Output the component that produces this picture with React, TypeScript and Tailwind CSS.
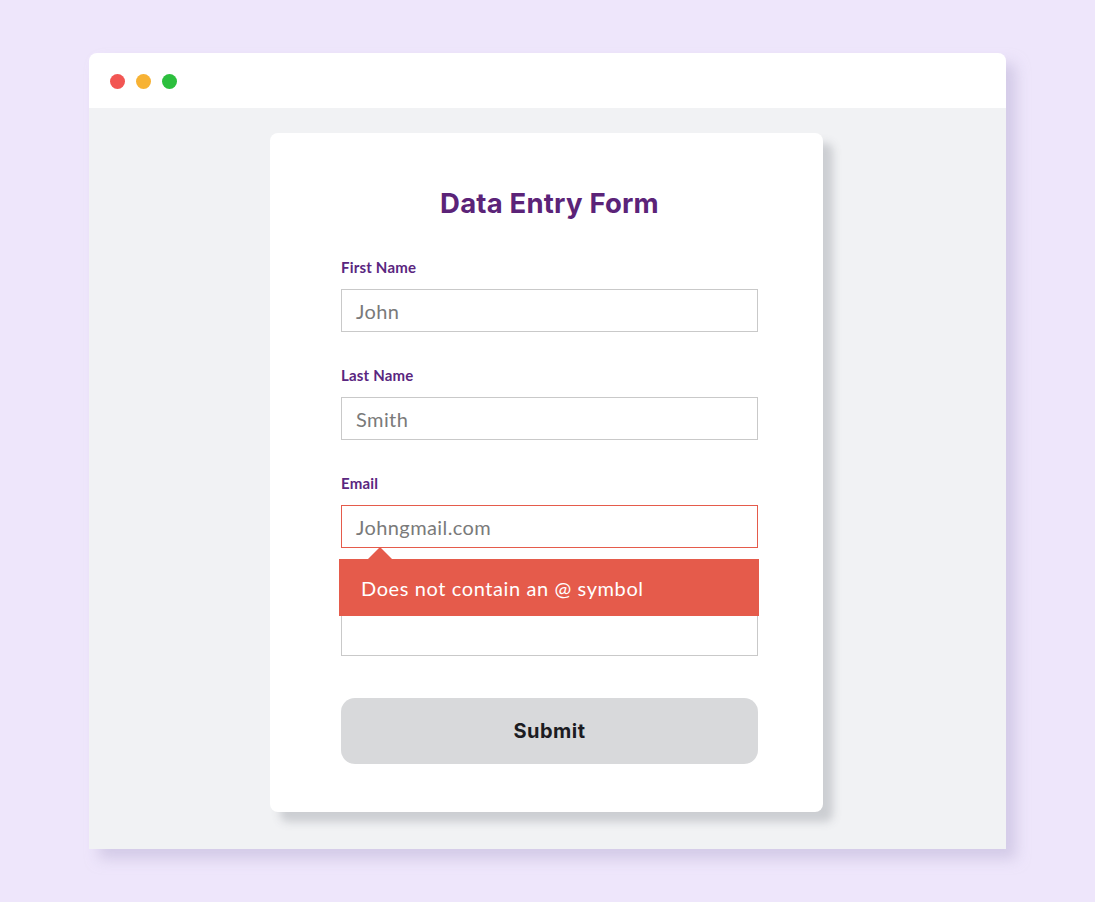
import React from "react";

function Label({ text }: { text: string }) {
  return (
    <label className="block text-[15px] leading-[20px] font-bold text-[#5A2680] font-['Lato',sans-serif] tracking-[0.2px] h-[20px]">
      {text}
    </label>
  );
}

function Field({ label, value }: { label: string; value: string }) {
  return (
    <div className="flex flex-col">
      <Label text={label} />
      <div className="mt-[12px] h-[43px] border border-[#C9C9C9] flex items-center pl-[14px] text-[20px] tracking-[0.4px] text-[#7a7a7a] font-['Lato',sans-serif]">
        {value}
      </div>
    </div>
  );
}

export default function App() {
  return (
    <div className="w-full h-[902px] bg-[#EEE6FB] pt-[53px] pl-[89px] overflow-hidden">
      <div className="w-[917px] h-[796px] rounded-t-[8px] flex flex-col shadow-[10px_10px_14px_rgba(190,180,215,0.55)]">
        <div className="h-[55px] bg-white rounded-t-[8px] flex items-center gap-[11px] pl-[21px] pt-[2px]">
          <span className="w-[15px] h-[15px] rounded-full bg-[#F25653]" />
          <span className="w-[15px] h-[15px] rounded-full bg-[#F7B234]" />
          <span className="w-[15px] h-[15px] rounded-full bg-[#2CBF3E]" />
        </div>
        <div className="flex-1 bg-[#F1F2F4] pt-[25px] pl-[181px]">
          <div className="w-[553px] h-[679px] bg-white rounded-[8px] shadow-[10px_10px_8px_rgba(200,202,206,0.9)] pl-[71px] pr-[65px] pt-[54px]">
            <h1 className="text-center text-[27.5px] leading-[32px] font-bold text-[#5B2378] font-['Inter',sans-serif] tracking-[0.2px]">
              Data Entry Form
            </h1>
            <div className="mt-[38px] flex flex-col gap-[33px]">
              <Field label="First Name" value="John" />
              <Field label="Last Name" value="Smith" />
              <div className="relative flex flex-col">
                <Label text="Email" />
                <div className="mt-[12px] h-[43px] border border-[#E55B4B] bg-white flex items-center pl-[14px] text-[20px] tracking-[0.4px] text-[#7a7a7a] font-['Lato',sans-serif]">
                  Johngmail.com
                </div>
                <div className="absolute left-[-2px] right-[-1px] top-[86px] h-[57px] bg-[#E55B4B] z-10 flex items-center pl-[22px] text-white text-[20px] tracking-[0.6px] font-['Lato',sans-serif]">
                  <div className="absolute left-[29px] top-[-12px] w-0 h-0 border-l-[12px] border-r-[12px] border-b-[12px] border-l-transparent border-r-transparent border-b-[#E55B4B]" />
                  Does not contain an @ symbol
                </div>
              </div>
              <Field label="" value="" />
            </div>
            <button className="mt-[42px] w-full h-[66px] rounded-[14px] bg-[#D8D9DB] text-[20px] tracking-[0.5px] font-bold text-[#1c1c22] font-['Inter',sans-serif]">
              Submit
            </button>
          </div>
        </div>
      </div>
    </div>
  );
}
